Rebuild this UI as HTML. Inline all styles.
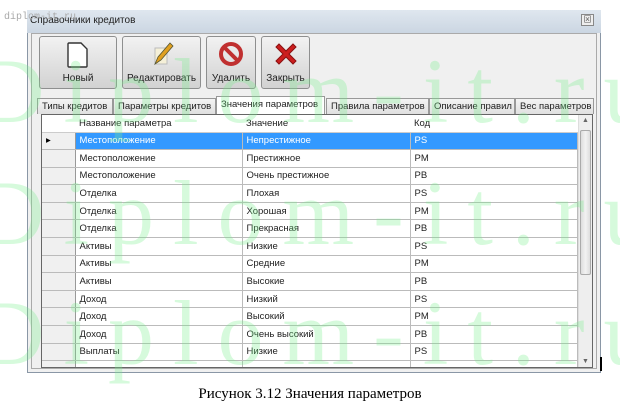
<!DOCTYPE html>
<html><head><meta charset="utf-8"><style>
*{margin:0;padding:0;box-sizing:border-box}
body{width:620px;height:408px;background:#fff;position:relative;overflow:hidden;font-family:"Liberation Sans","Noto Sans CJK SC",sans-serif;font-size:9.5px;color:#222}
.abs{position:absolute}
.win{left:27px;top:10px;width:574px;height:363px;border:1px solid #8a97a6;background:#f0f0f0}
.title{left:27px;top:10px;width:574px;height:23px;background:linear-gradient(#dfe7ef,#cbd6e2)}
.btn{position:absolute;top:36px;height:53px;border:1px solid #8e8f8f;border-radius:3px;background:linear-gradient(#f2f2f2,#e0e0e0 55%,#d2d2d2);text-align:center;font-size:10px;color:#222}
.btn span{position:absolute;bottom:4px;left:0;right:0}
.tab{position:absolute;top:98px;height:16px;border:1px solid #999;border-bottom:none;background:linear-gradient(#f4f4f4,#e0e0e0);font-size:9.5px;padding:2px 4px;white-space:nowrap}
.grid{left:41px;top:114px;width:552px;height:254px;border:1px solid #666;background:#fff;overflow:hidden}
table{border-collapse:collapse;position:absolute;left:0;top:0}
td{height:17.6px;border-right:1px solid #bbb;border-bottom:1px solid #bbb;padding-left:4px;font-size:9.5px;white-space:nowrap}
td.rh{width:33px;background:#f0f0f0;border-right:1px solid #999}
tr.hd td{background:#fff;height:17px;border-bottom:1px solid #ccc;border-right:none}
tr.sel td{background:#3399ff;color:#fff}
tr.sel td.rh{background:#f0f0f0;color:#000}
.wm{position:absolute;left:-22px;font-family:"Liberation Serif",serif;font-size:92px;color:rgba(120,240,140,.3);letter-spacing:19px;white-space:nowrap}
</style></head><body>
<div class="abs win"></div>
<div class="abs title"></div>
<div class="abs" style="left:30px;top:15px;font-size:10px">Справочники кредитов</div>
<div class="abs" style="left:4px;top:12px;font-family:'Liberation Mono',monospace;font-size:10px;color:#aaa">diplom-it.ru</div>
<div class="abs" style="left:581px;top:14px;width:13px;height:12px;border:1px solid #888;background:#eee;font-size:8px;text-align:center;line-height:10px;color:#555">⊠</div>
<div class="abs" style="left:31px;top:33px;width:566px;height:336px;border:1px solid #aaa;background:#f0f0f0"></div>
<div class="btn" style="left:39px;width:78px"><svg width="24" height="28" viewBox="0 0 24 28" style="margin-top:4px"><path d="M3 2h12l6 6v17a1 1 0 0 1-1 1H3a1 1 0 0 1-1-1V3a1 1 0 0 1 1-1z" fill="#fff" stroke="#333" stroke-width="1.4"/></svg><span>Новый</span></div>
<div class="btn" style="left:122px;width:79px"><svg width="26" height="28" viewBox="0 0 26 28" style="margin-top:3px"><path d="M6 8h12v16H6z" fill="#f5f0d8" stroke="#bbb"/><path d="M6 24l3-7 12-14 3 3-12 14z" fill="#e0a020" stroke="#553" stroke-width=".8"/></svg><span>Редактировать</span></div>
<div class="btn" style="left:206px;width:50px"><svg width="26" height="26" viewBox="0 0 26 26" style="margin-top:4px"><circle cx="13" cy="13" r="10" fill="none" stroke="#c03030" stroke-width="4"/><path d="M6 6l14 14" stroke="#c03030" stroke-width="4"/></svg><span>Удалить</span></div>
<div class="btn" style="left:261px;width:49px"><svg width="28" height="28" viewBox="0 0 28 28" style="margin-top:3px"><path d="M4 7l3-3 7 7 7-7 3 3-7 7 7 7-3 3-7-7-7 7-3-3 7-7z" fill="#cc1e1e" stroke="#8a1010"/></svg><span>Закрыть</span></div>
<div class="tab" style="left:37px;width:76px">Типы кредитов</div>
<div class="tab" style="left:113px;width:103px">Параметры кредитов</div>
<div class="tab" style="left:216px;top:96px;height:19px;width:109px;background:#fff">Значения параметров</div>
<div class="tab" style="left:326px;width:103px">Правила параметров</div>
<div class="tab" style="left:429px;width:86px">Описание правил</div>
<div class="tab" style="left:515px;width:79px">Вес параметров</div>
<div class="abs grid">
<table>
<tr class="hd"><td class="rh" style="background:#fff"></td><td style="width:167px">Название параметра</td><td style="width:168px">Значение</td><td style="width:167px">Код</td></tr>
<tr class="sel"><td class="rh">▸</td><td>Местоположение</td><td>Непрестижное</td><td>PS</td></tr>
<tr><td class="rh"></td><td>Местоположение</td><td>Престижное</td><td>PM</td></tr>
<tr><td class="rh"></td><td>Местоположение</td><td>Очень престижное</td><td>PB</td></tr>
<tr><td class="rh"></td><td>Отделка</td><td>Плохая</td><td>PS</td></tr>
<tr><td class="rh"></td><td>Отделка</td><td>Хорошая</td><td>PM</td></tr>
<tr><td class="rh"></td><td>Отделка</td><td>Прекрасная</td><td>PB</td></tr>
<tr><td class="rh"></td><td>Активы</td><td>Низкие</td><td>PS</td></tr>
<tr><td class="rh"></td><td>Активы</td><td>Средние</td><td>PM</td></tr>
<tr><td class="rh"></td><td>Активы</td><td>Высокие</td><td>PB</td></tr>
<tr><td class="rh"></td><td>Доход</td><td>Низкий</td><td>PS</td></tr>
<tr><td class="rh"></td><td>Доход</td><td>Высокий</td><td>PM</td></tr>
<tr><td class="rh"></td><td>Доход</td><td>Очень высокий</td><td>PB</td></tr>
<tr><td class="rh"></td><td>Выплаты</td><td>Низкие</td><td>PS</td></tr>
<tr><td class="rh"></td><td></td><td></td><td></td></tr>
</table>
<div class="abs" style="left:536px;top:0;width:15px;height:254px;background:#eee;border-left:1px solid #ddd"></div>
<div class="abs" style="left:538px;top:15px;width:11px;height:145px;background:linear-gradient(90deg,#ddd,#f2f2f2,#ddd);border:1px solid #aaa;border-radius:2px"></div>
<div class="abs" style="left:540px;top:2px;font-size:7px;color:#666">▲</div>
<div class="abs" style="left:540px;top:243px;font-size:7px;color:#666">▼</div>
</div>
<div class="abs" style="left:600px;top:357px;width:2px;height:14px;background:#000"></div>
<div class="abs" style="left:0;width:620px;top:386px;text-align:center;font-family:'Liberation Serif',serif;font-size:15px;color:#000">Рисунок 3.12 Значения параметров</div>
<div class="wm" style="top:38px">Diplom-it.ru</div>
<div class="wm" style="top:160px">Diplom-it.ru</div>
<div class="wm" style="top:280px">Diplom-it.ru</div>
</body></html>
